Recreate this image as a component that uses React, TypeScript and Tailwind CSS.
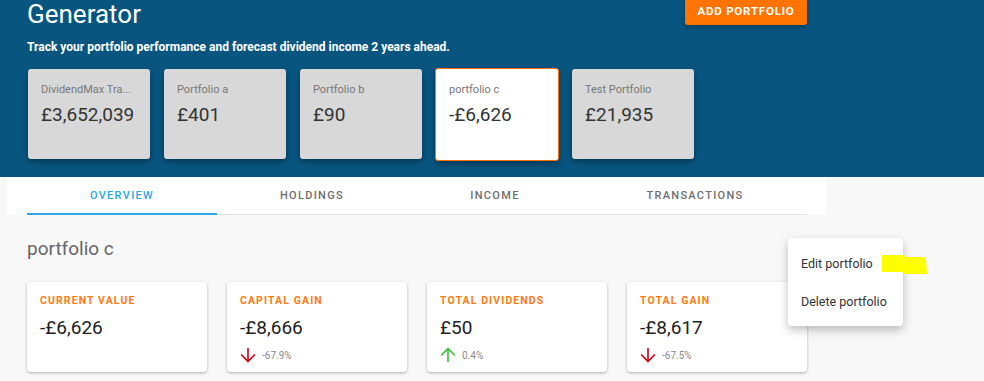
import React from "react";
import { ArrowDown, ArrowUp } from "lucide-react";

const portfolios = [
  { name: "DividendMax Tra...", value: "£3,652,039" },
  { name: "Portfolio a", value: "£401" },
  { name: "Portfolio b", value: "£90" },
  { name: "portfolio c", value: "-£6,626", selected: true },
  { name: "Test Portfolio", value: "£21,935" },
];

const tabs = [
  { label: "OVERVIEW", width: "w-[190px]", active: true },
  { label: "HOLDINGS", width: "w-[190px]" },
  { label: "INCOME", width: "w-[176px]" },
  { label: "TRANSACTIONS", width: "w-[224px]" },
];

const stats = [
  { label: "CURRENT VALUE", value: "-£6,626" },
  { label: "CAPITAL GAIN", value: "-£8,666", change: "-67.9%", up: false },
  { label: "TOTAL DIVIDENDS", value: "£50", change: "0.4%", up: true },
  { label: "TOTAL GAIN", value: "-£8,617", change: "-67.5%", up: false },
];

function PortfolioCard({ name, value, selected }: { name: string; value: string; selected?: boolean }) {
  return (
    <div
      className={
        selected
          ? "w-[124px] h-[93px] -mx-px -mt-px bg-white border border-[#ff6f00] rounded-[3px] shadow-[0_3px_6px_rgba(0,0,0,0.35)] px-[13px] pt-[14px]"
          : "w-[122px] h-[90px] bg-[#d8d8d8] rounded-[3px] shadow-[0_3px_6px_rgba(0,0,0,0.35)] px-[13px] pt-[14px]"
      }
    >
      <p className="text-[11px] leading-[14px] text-[#777] whitespace-nowrap">{name}</p>
      <p className="mt-[6px] text-[19px] leading-[24px] text-[#333]">{value}</p>
    </div>
  );
}

function StatCard({ label, value, change, up }: { label: string; value: string; change?: string; up?: boolean }) {
  return (
    <div className="w-[180px] h-[90px] bg-white rounded-[4px] shadow-[0_1px_3px_rgba(0,0,0,0.3)] px-[13px] pt-[12px]">
      <p className="text-[10.5px] leading-[14px] font-bold tracking-[1.1px] text-[#ff7a12]">{label}</p>
      <p className="mt-[8px] text-[19px] leading-[24px] text-[#222]">{value}</p>
      {change && (
        <div className="mt-[8px] flex items-center gap-[3px] h-[14px]">
          {up ? (
            <ArrowUp className="-ml-[3px] -my-[4px] w-[22px] h-[22px] text-[#3cc13b]" strokeWidth={1.8} />
          ) : (
            <ArrowDown className="-ml-[3px] -my-[4px] w-[22px] h-[22px] text-[#d0021b]" strokeWidth={1.8} />
          )}
          <span className="text-[10px] text-[#8a8a8a]">{change}</span>
        </div>
      )}
    </div>
  );
}

export default function App() {
  return (
    <div className="relative w-[984px] h-[381px] overflow-hidden bg-[#f8f8f8] font-['Roboto',sans-serif]">
      <header className="bg-[#085580] h-[177px] px-[27px]">
        <div className="flex justify-between items-start w-[780px]">
          <div>
            <h1 className="-mt-[1px] text-[26px] leading-[30px] text-white">Generator</h1>
            <p className="mt-[10px] text-[12px] leading-[16px] font-bold text-white">
              Track your portfolio performance and forecast dividend income 2 years ahead.
            </p>
          </div>
          <button className="-mt-[5px] h-[30px] w-[122px] bg-[#ff7300] rounded-[3px] text-white text-[11.5px] font-bold tracking-[0.8px] shadow-[0_2px_4px_rgba(0,0,0,0.3)] pt-[4px]">
            ADD PORTFOLIO
          </button>
        </div>
        <div className="mt-[14px] flex items-start gap-[14px] pl-px">
          {portfolios.map((p) => (
            <PortfolioCard key={p.name} {...p} />
          ))}
        </div>
      </header>

      <div className="ml-[7px] w-[820px] h-[38px] bg-white px-[20px]">
        <div className="flex h-full w-[780px] border-b border-[#e0e0e0]">
          {tabs.map((t) => (
            <div
              key={t.label}
              className={
                t.active
                  ? `${t.width} flex items-center justify-center pt-[2px] -mb-px border-b-2 border-[#29a9e0] text-[#29a9e0] text-[11px] font-medium tracking-[1.3px]`
                  : `${t.width} flex items-center justify-center pt-[2px] text-[#6f6f6f] text-[11px] font-medium tracking-[1.3px]`
              }
            >
              {t.label}
            </div>
          ))}
        </div>
      </div>

      <main className="px-[27px]">
        <h2 className="mt-[22px] text-[19px] leading-[24px] text-[#666]">portfolio c</h2>
        <div className="mt-[21px] flex gap-[20px]">
          {stats.map((s) => (
            <StatCard key={s.label} {...s} />
          ))}
        </div>
      </main>

      <div className="absolute left-[788px] top-[238px] w-[115px] bg-white rounded-[4px] shadow-[0_4px_10px_rgba(0,0,0,0.25)] pt-[7px] pb-[5px]">
        <div className="h-[38px] flex items-center pl-[13px] text-[12.5px] text-[#333] whitespace-nowrap">Edit portfolio</div>
        <div className="h-[38px] flex items-center pl-[13px] text-[12.5px] text-[#333] whitespace-nowrap">Delete portfolio</div>
      </div>

      <svg className="absolute left-[880px] top-[253px]" width="50" height="22" viewBox="0 0 50 22">
        <polygon points="2,2 24,2 26,4 44,4 46,6 47,21 24,21 22,19 2,19" fill="#ffff00" />
      </svg>
    </div>
  );
}
